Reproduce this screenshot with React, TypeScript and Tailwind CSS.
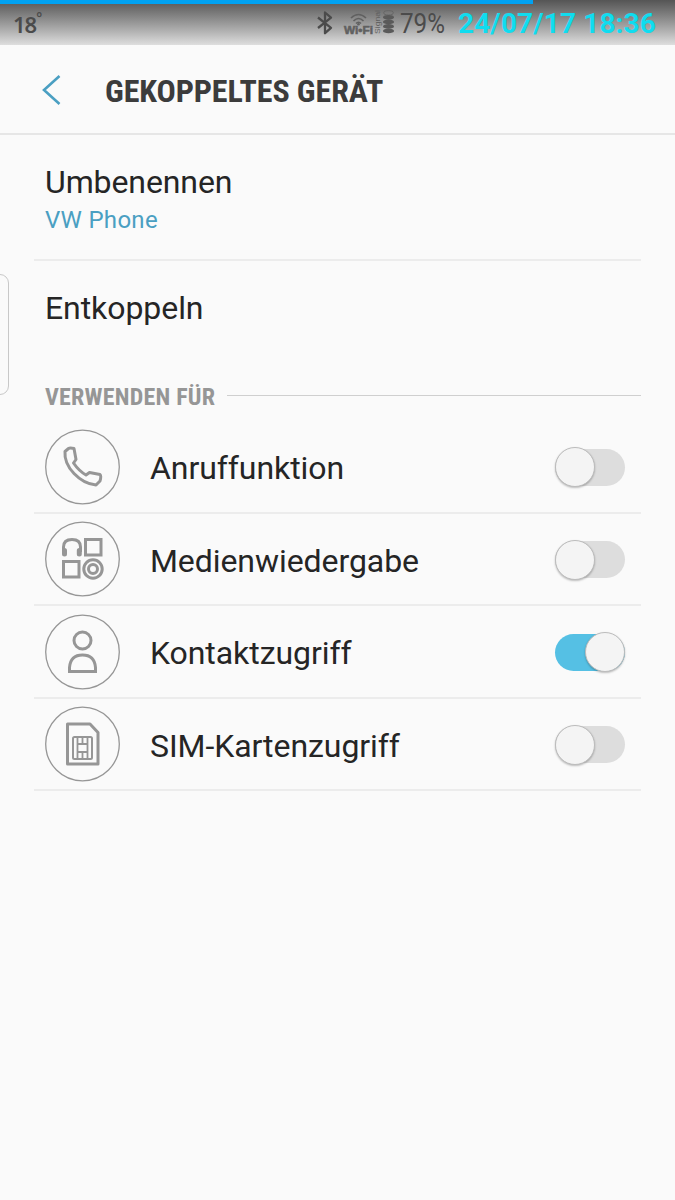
import type { ReactNode } from "react";

function StatusBar() {
  return (
    <header className="relative flex h-[45px] w-full items-start bg-linear-to-b from-[#555555] to-[#dedede] text-[#4b4b4b]">
      <div className="absolute top-0 left-0 h-1 w-[533px] bg-[#00a2f2]" />
      <div className="ml-[13px] flex w-[303px] pt-[8px]">
        <span className="font-['Noto_Sans'] text-[22px] leading-[32px] font-semibold tracking-[-1px]">18</span>
        <span className="mt-[3px] font-['Noto_Sans'] text-[14px] leading-[14px] font-semibold">°</span>
      </div>
      <svg className="mt-[10px] h-[26px] w-[18px] shrink-0" viewBox="0 0 18 26" fill="none" stroke="currentColor" strokeWidth="2.300" strokeLinejoin="round">
        <path d="M2 7.500 15 17.800 9 23.200V2.500l6 5.200L2 18" />
      </svg>
      <svg className="ml-[9px] mt-[8px] h-[28px] w-[54px] shrink-0" viewBox="0 0 54 28" fill="none">
        <g stroke="#606060" strokeWidth="1.600">
          <path d="M8 10Q15.500 3 23 10M10.500 13Q15.500 8 20.500 13M13 15.500Q15.500 13 18 15.500" />
        </g>
        <circle cx="15.500" cy="16.300" r="1.300" fill="#606060" />
        <text x="1" y="25.500" textLength="29" lengthAdjust="spacingAndGlyphs" fontFamily="Liberation Sans" fontWeight="700" fontSize="10" fill="#606060" stroke="#606060" strokeWidth=".5">Wi•Fi</text>
        <text transform="translate(37 26) rotate(-90)" textLength="24" lengthAdjust="spacingAndGlyphs" fontFamily="Liberation Sans" fontSize="8" fill="#606060">Signal</text>
        <ellipse cx="45.500" cy="4.800" rx="4.800" ry="2.200" stroke="#666" />
        <g fill="#5a5a5a">
          <ellipse cx="45.500" cy="9.300" rx="5.500" ry="2.400" />
          <ellipse cx="45.500" cy="13.900" rx="5.500" ry="2.400" />
          <ellipse cx="45.500" cy="18.400" rx="5.500" ry="2.400" />
          <ellipse cx="45.500" cy="22.900" rx="5.500" ry="2.400" />
        </g>
      </svg>
      <span className="ml-[3px] w-[58px] origin-left scale-x-[.865] pt-[8px] text-[28px] leading-[32px]">79%</span>
      <span className="pt-[8px] text-[28px] leading-[32px] font-bold tracking-[0.12px] whitespace-nowrap text-[#10dcef]">24/07/17 18:36</span>
    </header>
  );
}

function Switch({ on = false }: { on?: boolean }) {
  return (
    <div className={`mt-[2px] flex h-[37px] w-[70px] items-center rounded-full ${on ? "justify-end bg-[#55c0e4]" : "justify-start bg-[#dddddd]"}`}>
      <div className="h-[40px] w-[40px] shrink-0 rounded-full border border-[#bcbcbc] bg-[#f4f4f4] shadow-[0_1px_2px_rgba(0,0,0,0.25)]" />
    </div>
  );
}

function ProfileRow({ label, on, children }: { label: string; on?: boolean; children: ReactNode }) {
  return (
    <div className="flex h-[92.5px] items-center border-b-2 border-[#ececec] pr-[16px] pl-[11px]">
      <svg className="mt-[1px] h-[76px] w-[76px] shrink-0" viewBox="0 0 76 76" fill="none" stroke="#969696">
        <circle cx="37.500" cy="38" r="36.800" strokeWidth="1.300" />
        {children}
      </svg>
      <span className="ml-[29px] flex-1 pt-[4px] text-[32px] leading-[40px] tracking-[-0.07px] text-[#252525]">{label}</span>
      <Switch on={on} />
    </div>
  );
}

export default function App() {
  return (
    <div className="relative flex min-h-[1200px] w-[675px] flex-col overflow-hidden bg-[#fafafa] font-['Roboto',sans-serif]">
      <StatusBar />
      <div className="flex h-[90px] items-center border-b-2 border-[#e6e6e6] pl-[40px]">
        <svg className="mt-[1px] h-[34px] w-[24px] shrink-0" viewBox="0 0 24 34" fill="none" stroke="#4a9fc2" strokeWidth="2.600">
          <path d="M19.500 3 4 17l15.500 14" />
        </svg>
        <h1 className="ml-[41px] pt-[4px] font-['Roboto_Condensed','Roboto',sans-serif] text-[32px] leading-[40px] font-bold tracking-[-0.08px] whitespace-nowrap text-[#3c3c3c]">GEKOPPELTES GERÄT</h1>
      </div>
      <main className="mr-[34px] ml-[34px] flex flex-col">
        <section className="h-[126px] border-b-2 border-[#ececec] pt-[27px] pl-[11px]">
          <div className="text-[32px] leading-[40px] tracking-[-0.1px] text-[#252525]">Umbenennen</div>
          <div className="mt-[2px] text-[24px] leading-[32px] tracking-[0.3px] text-[#4a9fc2]">VW Phone</div>
        </section>
        <section className="h-[119px] pt-[27px] pl-[11px]">
          <div className="text-[32px] leading-[40px] tracking-[-0.07px] text-[#252525]">Entkoppeln</div>
        </section>
        <div className="flex h-[41px] items-start pl-[11px]">
          <h2 className="w-[182px] pt-[1px] font-['Roboto_Condensed','Roboto',sans-serif] text-[24px] leading-[32px] font-bold tracking-[0.22px] whitespace-nowrap text-[#969696]">VERWENDEN FÜR</h2>
          <div className="mt-[15px] h-px flex-1 bg-[#cfcfcf]" />
        </div>
        <ProfileRow label="Anruffunktion">
          <path strokeWidth="3" strokeLinejoin="round" d="M20 22.500 23.500 19.500Q25 18.500 29 19.500L31 30.500 28.500 34Q34 42 41 46L44.500 43.500 55 45.500Q56.500 47 55 52L51 56Q39 55 29 44.500 19 34 20 22.500Z" />
        </ProfileRow>
        <ProfileRow label="Medienwiedergabe">
          <g strokeWidth="3">
            <path d="M18.500 31V26Q18.500 18.500 27 18.500T35.500 26V31" />
            <rect x="40.500" y="18.500" width="15.500" height="15.500" />
            <rect x="18.500" y="40.500" width="15.500" height="15.500" />
            <circle cx="48" cy="48" r="9.200" />
            <circle cx="48" cy="48" r="4.500" />
          </g>
          <path strokeWidth="5" strokeLinecap="round" d="M19.500 29.500V33M34.300 29.500V33" />
        </ProfileRow>
        <ProfileRow label="Kontaktzugriff" on>
          <circle cx="37.500" cy="26.500" r="8.500" strokeWidth="3" />
          <path strokeWidth="3" d="M24.500 57.500V53.500Q25.500 41 37.500 41T50.500 53.500V57.500Z" />
        </ProfileRow>
        <ProfileRow label="SIM-Kartenzugriff">
          <path strokeWidth="3" strokeLinejoin="round" d="M22.500 18H45L53 26.500V58H22.500Z" />
          <rect x="28" y="31" width="19" height="22" rx="1.500" strokeWidth="2" />
          <path strokeWidth="1.800" d="M32.500 31V53M42.500 31V53M32.500 38H42.500M32.500 46H42.500M37.500 31V38M37.500 46V53" />
        </ProfileRow>
      </main>
      <div className="absolute top-[274px] -left-[12px] h-[121px] w-[21px] rounded-[9px] border border-[#c8c8c8]" />
    </div>
  );
}
